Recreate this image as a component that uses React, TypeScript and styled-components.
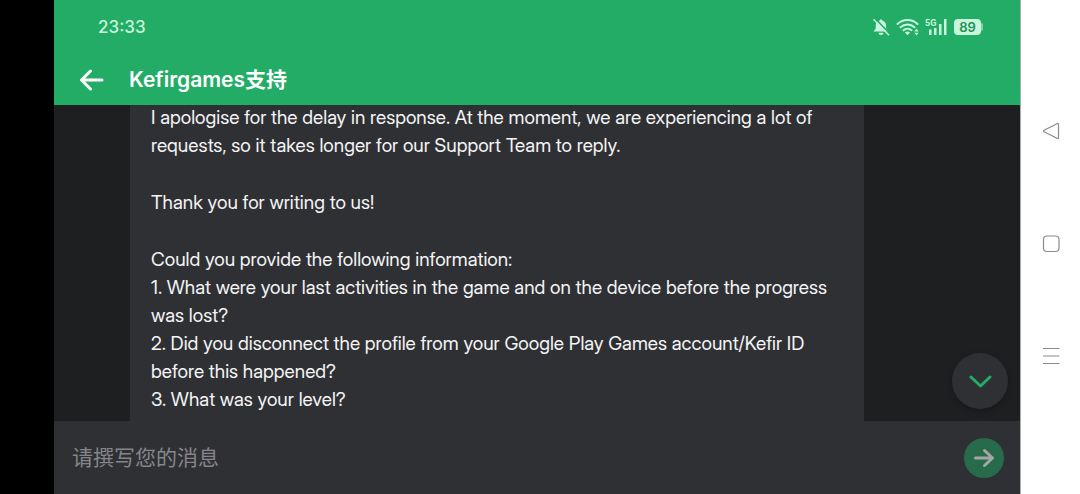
import React from 'react';
import styled, { createGlobalStyle } from 'styled-components';

const GlobalStyle = createGlobalStyle`
  *, *::before, *::after { box-sizing: border-box; }
  body {
    margin: 0;
    background: #fff;
    font-family: Inter, "Noto Sans CJK SC", sans-serif;
  }
  p, h1, ol { margin: 0; padding: 0; }
  button { padding: 0; border: 0; background: none; color: inherit; cursor: pointer; font: inherit; }
  svg { display: block; }
`;

const Screen = styled.div`
  display: grid;
  grid-template-columns: 54px minmax(0, 1fr) 60px;
  height: 100vh;
`;

const CutoutBar = styled.div`
  background: #000;
`;

const Phone = styled.main`
  display: flex;
  flex-direction: column;
  min-height: 0;
  background: #1e1f21;
`;

const Header = styled.header`
  flex: none;
  background: #22ac66;
`;

const StatusBar = styled.div`
  display: flex;
  align-items: center;
  justify-content: space-between;
  height: 54px;
  padding: 0 37px 0 44px;
  color: #c9f5dc;
`;

const Clock = styled.time`
  font-size: 17px;
  font-weight: 500;
  line-height: 24px;
`;

const StatusIcons = styled.div`
  display: flex;
  align-items: center;
  gap: 6px;
`;

const Battery = styled.span`
  display: flex;
  align-items: center;
  &::after {
    content: "";
    width: 2px;
    height: 8px;
    border-radius: 0 2px 2px 0;
    background: #7fd3a6;
  }
`;

const BatteryLevel = styled.span`
  width: 27px;
  border-radius: 4px;
  background: #c9f5dc;
  color: #22905a;
  font-size: 13px;
  font-weight: 600;
  line-height: 16px;
  text-align: center;
`;

const TitleBar = styled.div`
  display: flex;
  align-items: center;
  gap: 24px;
  height: 51px;
  padding-left: 25px;
  color: #fff;
`;

const Title = styled.h1`
  font-size: 21px;
  font-weight: 600;
  line-height: 28px;
`;

const Conversation = styled.section`
  position: relative;
  display: flex;
  flex: 1;
  flex-direction: column;
  justify-content: flex-end;
  min-height: 0;
  overflow: hidden;
  padding: 0 156px 0 76px;
`;

const Message = styled.article`
  display: flex;
  flex-direction: column;
  gap: 29px;
  padding: 21px 21px 7px;
  background: #2f3034;
  color: #f4f4f5;
  font-family: "Inter Display", Inter, sans-serif;
  font-size: 19px;
  line-height: 28px;
`;

const Questions = styled.ol`
  list-style: none;
`;

const ScrollDown = styled.button`
  position: absolute;
  right: 12px;
  bottom: 12px;
  display: grid;
  place-items: center;
  width: 56px;
  height: 56px;
  border-radius: 50%;
  background: #2f3034;
  color: #22ac66;
  box-shadow: 0 2px 6px rgba(0, 0, 0, 0.25);
`;

const Composer = styled.form`
  display: flex;
  flex: none;
  align-items: center;
  height: 73px;
  padding: 0 16px 0 18px;
  background: #2f3034;
`;

const MessageInput = styled.input`
  flex: 1;
  min-width: 0;
  padding: 0;
  border: 0;
  outline: 0;
  background: none;
  color: #f4f4f5;
  font-family: inherit;
  font-size: 21px;
  line-height: 32px;
  &::placeholder { color: #85868a; opacity: 1; }
`;

const SendButton = styled.button`
  display: grid;
  place-items: center;
  width: 40px;
  height: 40px;
  border-radius: 50%;
  background: #286b4a;
  color: #a3a7a5;
`;

const SystemNav = styled.nav`
  display: flex;
  flex-direction: column;
  align-items: center;
  justify-content: space-between;
  padding: 121px 0 128px;
  border-left: 1px solid #a9abad;
  background: #fff;
  color: #8a8a8a;
`;

const paragraphs = [
  'I apologise for the delay in response. At the moment, we are experiencing a lot of requests, so it takes longer for our Support Team to reply.',
  'Thank you for writing to us!',
];

const questions = [
  '1. What were your last activities in the game and on the device before the progress was lost?',
  '2. Did you disconnect the profile from your Google Play Games account/Kefir ID before this happened?',
  '3. What was your level?',
];

const MutedBell = () => (
  <svg width="18" height="18" viewBox="0 0 18 18" fill="none" aria-label="Notifications muted">
    <path d="M9 1.5c-.9 0-1.400.5-1.500 1.200C5 3.300 3.700 5.200 3.700 7.500v3L1.500 13.500h14.800l-2.200-3v-3c0-2.300-1.200-4.200-3.600-4.800C10.400 2 9.900 1.500 9 1.500z" fill="currentColor" />
    <path d="M6.500 14.800h5a2.500 2.200 0 0 1-5 0z" fill="currentColor" />
    <path d="M2.800 .2l15 15.500" stroke="#22ac66" strokeWidth="1.600" />
    <path d="M1.500 1.200l15.500 16" stroke="currentColor" strokeWidth="1.500" />
  </svg>
);

const Wifi = () => (
  <svg width="23" height="18" viewBox="0 0 23 18" fill="none" aria-label="Wi-Fi">
    <g stroke="currentColor" strokeWidth="2" strokeLinecap="round">
      <path d="M1.500 6c5.500-5.300 14.500-5.300 20 0" />
      <path d="M4.500 9.300c4-3.800 10-3.800 14 0" />
      <path d="M7.500 12.300c2.300-2.200 5.700-2.200 8 0" />
    </g>
    <path d="M9 14.400c1.500-1.300 3.500-1.300 5 0L11.500 17.200z" fill="currentColor" />
    <path d="M18.300 13.500l2.200-2.700 2.200 2.700zM18.300 14.800l2.200 2.700 2.200-2.700z" fill="currentColor" />
  </svg>
);

const Signal = () => (
  <svg width="23" height="18" viewBox="0 0 23 18" fill="currentColor" aria-label="5G signal">
    <text x="0" y="8" fontSize="9" fontWeight="700" fontFamily="Roboto, sans-serif">5G</text>
    <path d="M4 11.500h2.500v5.500H4zM9 10h2.500v7H9zM14 6H16.500V17h-2.500zM19 1H21.500v16h-2.500z" />
  </svg>
);

export default function App() {
  return (
    <>
      <GlobalStyle />
      <Screen>
        <CutoutBar />
        <Phone>
          <Header>
            <StatusBar>
              <Clock>23:33</Clock>
              <StatusIcons>
                <MutedBell />
                <Wifi />
                <Signal />
                <Battery>
                  <BatteryLevel>89</BatteryLevel>
                </Battery>
              </StatusIcons>
            </StatusBar>
            <TitleBar>
              <button type="button" aria-label="Back">
                <svg width="26" height="24" viewBox="0 0 26 24" fill="none" stroke="currentColor" strokeWidth="3" strokeLinecap="round" strokeLinejoin="round">
                  <path d="M23 12H3M11.500 3L2.500 12l9 9" />
                </svg>
              </button>
              <Title>Kefirgames支持</Title>
            </TitleBar>
          </Header>
          <Conversation>
            <Message>
              {paragraphs.map((text) => <p key={text}>{text}</p>)}
              <div>
                <p>Could you provide the following information:</p>
                <Questions>
                  {questions.map((text) => <li key={text}>{text}</li>)}
                </Questions>
              </div>
            </Message>
            <ScrollDown type="button" aria-label="Scroll to latest">
              <svg width="24" height="16" viewBox="0 0 24 16" fill="none" stroke="currentColor" strokeWidth="3" strokeLinecap="round" strokeLinejoin="round">
                <path d="M3 4l9.500 9L22 4" />
              </svg>
            </ScrollDown>
          </Conversation>
          <Composer onSubmit={(event) => event.preventDefault()}>
            <MessageInput aria-label="请撰写您的消息" placeholder="请撰写您的消息" />
            <SendButton type="submit" aria-label="Send">
              <svg width="22" height="20" viewBox="0 0 22 20" fill="none" stroke="currentColor" strokeWidth="3" strokeLinecap="round" strokeLinejoin="round">
                <path d="M2.500 10H19.500M11.500 2.500l8 7.500-8 7.500" />
              </svg>
            </SendButton>
          </Composer>
        </Phone>
        <SystemNav aria-label="System navigation">
          <button type="button" aria-label="Back">
            <svg width="20" height="20" viewBox="0 0 20 20" fill="none" stroke="currentColor" strokeWidth="1.200" strokeLinejoin="round">
              <path d="M16.500 2.500L3 9.200q-1 .8 0 1.600l13.500 6.700q1 .3 1-.8V3.300q0-1-1-.8z" />
            </svg>
          </button>
          <button type="button" aria-label="Home">
            <svg width="20" height="20" viewBox="0 0 20 20" fill="none" stroke="currentColor" strokeWidth="1.200">
              <rect x="2.500" y="2" width="15.500" height="15.500" rx="3.500" />
            </svg>
          </button>
          <button type="button" aria-label="Recent apps">
            <svg width="20" height="20" viewBox="0 0 20 20" fill="none" stroke="currentColor" strokeWidth="1.200">
              <path d="M2 2.500h16.500M2 10h16.500M2 17.500h16.500" />
            </svg>
          </button>
        </SystemNav>
      </Screen>
    </>
  );
}
